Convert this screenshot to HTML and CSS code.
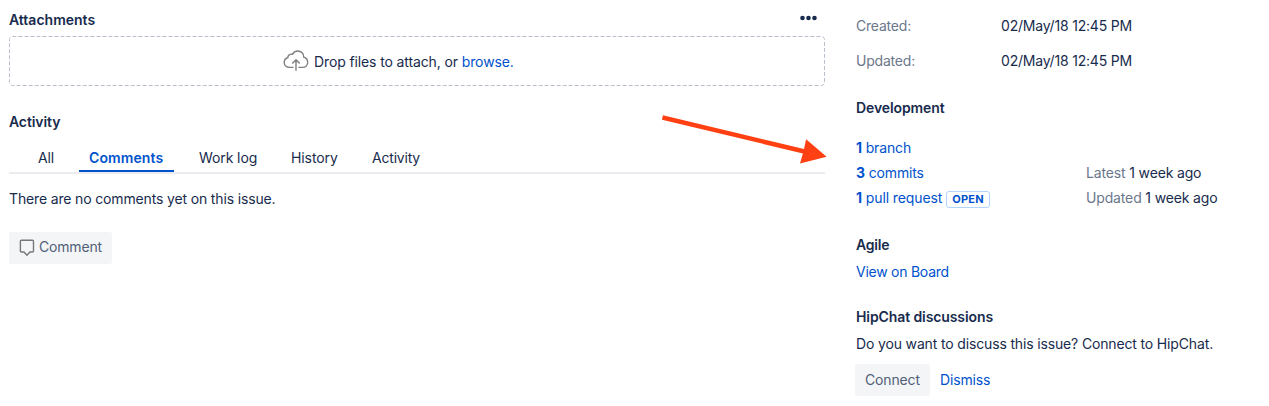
FILE: index.html
```html
<!DOCTYPE html>
<html lang="en">
<head>
<meta charset="utf-8">
<title>Issue</title>
<link rel="stylesheet" href="styles.css">
</head>
<body>
<div class="issue">
  <main class="main">
    <header class="section-head">
      <h2 class="attachments-title">Attachments</h2>
      <svg class="more" width="18" height="6" viewBox="0 0 18 6" fill="#172b4d"><circle cx="3.5" cy="3" r="2.3"/><circle cx="9.5" cy="3" r="2.3"/><circle cx="15.5" cy="3" r="2.3"/></svg>
    </header>
    <div class="dropzone">
      <svg class="dash" width="816" height="50"><rect x=".5" y=".5" width="815" height="49" rx="3" fill="none" stroke="#b9bfcb" stroke-dasharray="4 2"/></svg>
      <svg class="cloud" width="26" height="22" viewBox="0 0 26 22" fill="none" stroke="#808080" stroke-width="1.4"><path d="M10.5 17.4H6.5C3.4 17.4 1.2 15.2 1.2 12.6C1.2 10.2 2.7 8.3 4.8 7.8C4.7 5.3 7.1 3.7 9.4 4.3C10.6 2.1 12.5 1 14.7 1C18.3 1 20.9 3.7 20.8 7.2C23.1 7.9 24.7 10 24.7 12.3C24.7 15.1 22.6 17.4 19.7 17.4H15.4M13 20.8V9.7M9.3 13.4L13 9.7L16.7 13.4"/></svg>
      <span class="drop-text">Drop files to attach, or <a>browse.</a></span>
    </div>
    <h2 class="activity-title">Activity</h2>
    <nav class="tabs">
      <a class="tab tab-all">All</a><a class="tab tab-active">Comments</a><a class="tab tab-work">Work log</a><a class="tab tab-history">History</a><a class="tab tab-activity">Activity</a>
    </nav>
    <p class="empty">There are no comments yet on this issue.</p>
    <button class="button comment">
      <svg width="16" height="18" viewBox="0 0 16 18" fill="none" stroke="#777" stroke-width="1.4"><path d="M2.5 1.2H13.5Q14.6 1.2 14.6 2.3V12Q14.6 13.1 13.5 13.1H11L8 16.3L5 13.1H2.5Q1.4 13.1 1.4 12V2.3Q1.4 1.2 2.5 1.2Z"/></svg>
      <span class="comment-label">Comment</span>
    </button>
  </main>
  <aside class="side">
    <dl class="dates">
      <dt>Created:</dt><dd>02/May/18 12:45 PM</dd>
      <dt>Updated:</dt><dd>02/May/18 12:45 PM</dd>
    </dl>
    <h2 class="dev-title">Development</h2>
    <div class="dev">
      <span><a><b>1</b> branch</a></span><span></span>
      <span><a><b>3</b> commits</a></span><span><i>Latest</i> 1 week ago</span>
      <span class="pull"><a><b>1</b> pull request</a><span class="open">OPEN</span></span><span><i>Updated</i> 1 week ago</span>
    </div>
    <h2 class="agile-title">Agile</h2>
    <a class="board">View on Board</a>
    <h2 class="hip-title">HipChat discussions</h2>
    <p class="hip-text">Do you want to discuss this issue? Connect to HipChat.</p>
    <div class="actions"><button class="button connect">Connect</button><a class="dismiss">Dismiss</a></div>
  </aside>
  <svg class="arrow" width="166" height="52" viewBox="0 0 166 52" fill="#ff4013"><path d="M.9 .2L142 34L144.1 24.3L164.6 41.7L138 48.6L140.9 38.4L0 4.8Z"/></svg>
</div>
</body>
</html>
```
FILE: styles.css
```css
* { box-sizing: border-box; }
body { margin: 0; background: #fff; color: #172b4d; font: 14px/20px Inter, "Liberation Sans", sans-serif; letter-spacing: -0.15px; white-space: nowrap; }
h2, p, dl, dd { margin: 0; }
h2 { font-size: 14px; line-height: 20px; font-weight: 600; letter-spacing: -0.1px; }
a { color: #0052cc; }
b { font-weight: 700; }
i { font-style: normal; color: #6b778c; }
.issue { position: relative; display: flex; height: 406px; overflow: hidden; }
.main { width: 816px; margin-left: 9px; padding-top: 10px; }
.section-head { display: flex; justify-content: space-between; height: 26px; }
.attachments-title { letter-spacing: 0; }
.more { margin: 5px 8px 0 0; }
.dropzone { position: relative; display: flex; align-items: center; height: 50px; padding-left: 273px; }
.dash { position: absolute; left: 0; top: 0; }
.cloud { margin-left: 1px; }
.drop-text { margin: 1px 0 0 5px; letter-spacing: -0.12px; }
.activity-title { margin-top: 26px; }
.tabs { display: flex; height: 42px; padding-left: 19px; border-bottom: 2px solid #ebecf0; }
.tab { height: 40px; padding: 16px 10px 0; color: #172b4d; letter-spacing: -0.1px; }
.tab-all { width: 51px; }
.tab-active { width: 95px; border-bottom: 2px solid #0052cc; color: #0052cc; font-weight: 600; letter-spacing: .1px; }
.tab-work { width: 92px; margin-left: 15px; }
.tab-history { width: 81px; }
.tab-activity { letter-spacing: -0.2px; }
.empty { margin-top: 15px; }
.button { display: flex; align-items: center; height: 32px; padding: 0 10px; border: 0; border-radius: 3px; background: #f4f5f7; color: #505f79; font: inherit; letter-spacing: inherit; }
.comment { width: 103px; margin-top: 23px; gap: 4px; }
.comment-label { margin-top: -2px; }
.side { margin-left: 31px; padding-top: 16px; }
.dates { display: grid; grid-template-columns: 145px auto; row-gap: 15px; letter-spacing: -0.2px; }
dt { color: #6b778c; }
.dev-title { margin-top: 27px; }
.dev { display: grid; grid-template-columns: 230px auto; row-gap: 5px; margin-top: 20px; }
.pull { display: flex; }
.pull a { letter-spacing: -0.1px; }
.open { height: 17px; margin: 3px 0 0 4px; padding: 0 5px; border: 1px solid #b3d4ff; border-radius: 3px; color: #0052cc; font-size: 11px; line-height: 15px; font-weight: 700; letter-spacing: .2px; }
.agile-title { margin-top: 27px; letter-spacing: -0.2px; }
.board { display: block; margin-top: 7px; letter-spacing: -0.25px; }
.hip-title { margin-top: 25px; }
.hip-text { margin-top: 7px; }
.actions { display: flex; align-items: center; margin: 10px 0 0 -1px; }
.connect { width: 75px; margin-right: 10px; }
.arrow { position: absolute; left: 662px; top: 115px; }
```
